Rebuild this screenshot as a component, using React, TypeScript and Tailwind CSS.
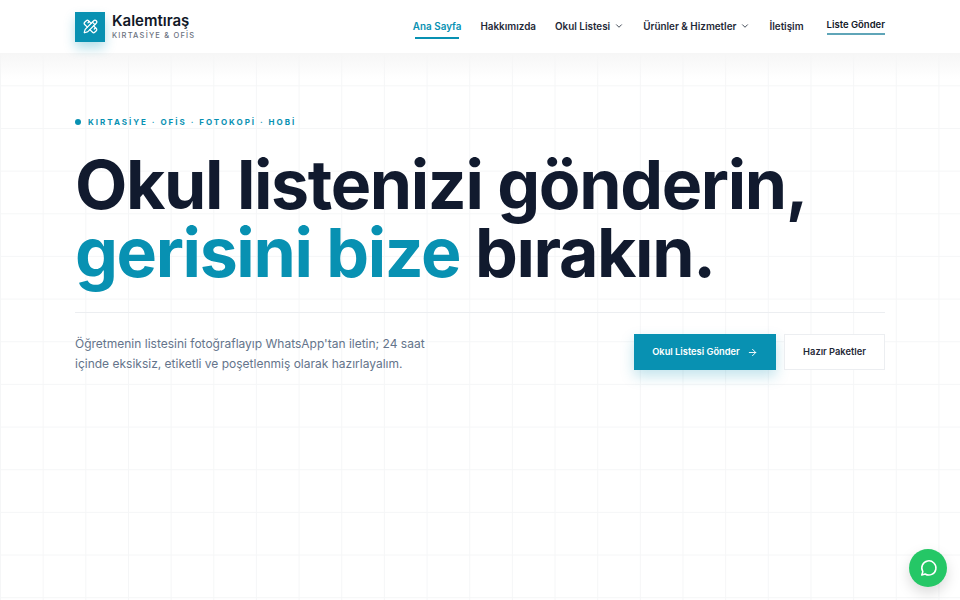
import { ArrowRight, ChevronDown, PencilRuler } from "lucide-react";

const navLinks = [
  { label: "Ana Sayfa", active: true },
  { label: "Hakkımızda" },
  { label: "Okul Listesi", caret: true },
  { label: "Ürünler & Hizmetler", caret: true },
  { label: "İletişim" },
];

export default function App() {
  return (
    <div className="relative h-[600px] w-[960px] overflow-hidden bg-white font-['Inter',sans-serif] text-[#0f172a]">
      {/* grid backdrop */}
      <div className="absolute inset-0 bg-[linear-gradient(#f5f6f7_1px,transparent_1px),linear-gradient(90deg,#f5f6f7_1px,transparent_1px)] bg-[size:42.67px_42.67px]" />
      <div className="absolute inset-x-0 top-[53px] h-[26px] bg-gradient-to-b from-[#f6f6f6] to-transparent" />

      <div className="relative">
        <header className="flex h-[53px] items-center justify-between bg-white px-[75px]">
          <div className="flex items-center gap-[7px]">
            <div className="flex h-[30px] w-[30px] items-center justify-center bg-[#0891b2] shadow-[0_6px_12px_rgba(8,145,178,0.3)]">
              <PencilRuler className="h-[15px] w-[15px] text-white" strokeWidth={2} />
            </div>
            <div>
              <div className="text-[15px] leading-[18px] font-semibold text-[#111827]">Kalemtıraş</div>
              <div className="text-[7.5px] leading-[11px] font-medium tracking-[0.16em] text-[#6b7280]">KIRTASİYE &amp; OFİS</div>
            </div>
          </div>
          <nav className="flex items-center gap-[19px] text-[9.9px] font-semibold text-[#1f2937]">
            {navLinks.map((link) => (
              <span key={link.label} className={link.active ? "flex flex-col items-center pt-[5px] text-[#0891b2]" : "flex items-center gap-[4px]"}>
                {link.label}
                {link.caret && <ChevronDown className="h-[10px] w-[10px]" />}
                {link.active && <span className="mt-[3px] h-[2px] w-[44px] bg-[#0891b2]" />}
              </span>
            ))}
            <span className="ml-[4px] border-b-2 border-[#5fa5b8] pb-[1px] text-[9.5px] text-[#111827]">Liste Gönder</span>
          </nav>
        </header>

        <main className="px-[75px] pt-[63px]">
          <div className="flex items-center gap-[7px] text-[8px] font-bold tracking-[0.25em] text-[#0891b2]">
            <span className="h-[6px] w-[6px] rounded-full bg-[#0891b2]" />
            KIRTASİYE · OFİS · FOTOKOPİ · HOBİ
          </div>
          <h1 className="mt-[22px] text-[68px] leading-[68px] font-bold tracking-[-0.02em] text-[#111a2e]">
            Okul listenizi gönderin,
            <br />
            <span className="text-[#0891b2]">gerisini bize</span> bırakın.
          </h1>
          <div className="mt-[26px] flex items-start justify-between border-t border-[#eceef1] pt-[21px]">
            <p className="w-[360px] text-[12px] leading-[19.5px] text-[#64748b]">
              Öğretmenin listesini fotoğraflayıp WhatsApp'tan iletin; 24 saat içinde eksiksiz, etiketli ve poşetlenmiş olarak hazırlayalım.
            </p>
            <div className="flex gap-[8px] text-[9.3px] font-semibold">
              <button className="flex h-[36px] w-[142px] items-center justify-center gap-[7px] bg-[#0891b2] text-white shadow-[0_6px_14px_rgba(8,145,178,0.25)]">
                Okul Listesi Gönder
                <ArrowRight className="h-[11px] w-[11px]" />
              </button>
              <button className="h-[36px] w-[101px] border border-[#eceef1] bg-white text-[#1f2937]">Hazır Paketler</button>
            </div>
          </div>
        </main>
      </div>

      <button className="absolute right-[13px] bottom-[13px] flex h-[38px] w-[38px] items-center justify-center rounded-full bg-[#25c766] text-white shadow-[0_6px_14px_rgba(0,0,0,0.15)]">
        <svg viewBox="0 0 24 24" className="h-[20px] w-[20px]" fill="none" stroke="white" strokeWidth="1.8" strokeLinecap="round" strokeLinejoin="round">
          <path d="M4.5 20.5 5.8 16.4A8.5 8.5 0 1 1 8.6 19.2z" />
        </svg>
      </button>
    </div>
  );
}
